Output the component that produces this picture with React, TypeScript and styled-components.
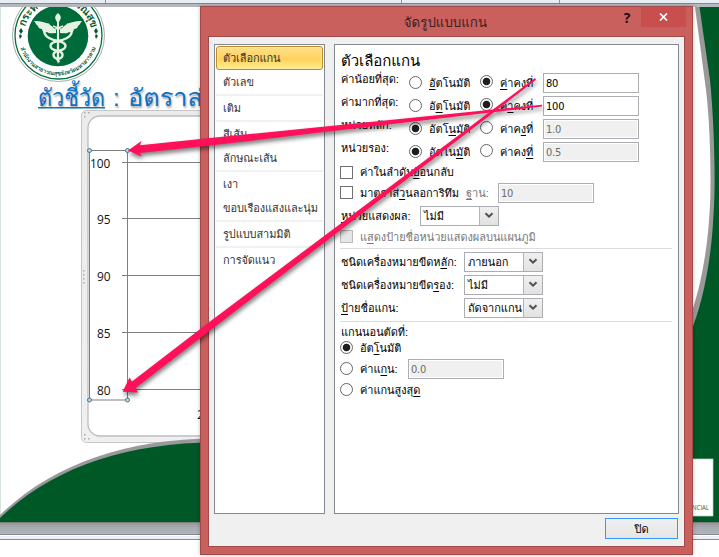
import React from 'react';
import styled, { createGlobalStyle } from 'styled-components';

const UI = 'Loma, "Noto Sans Thai Looped", "Noto Sans Thai", "Noto Sans", "DejaVu Sans", sans-serif';

const Global = createGlobalStyle`
  * { box-sizing: border-box; }
  html, body { margin: 0; padding: 0; background: #fff; overflow: hidden; }
  u { text-decoration: underline; text-underline-offset: 2px; text-decoration-thickness: 1px; text-decoration-skip-ink: none; }
`;

const Screen = styled.div`
  position: relative;
  width: 719px;
  height: 557px;
  overflow: hidden;
  display: flex;
  flex-direction: column;
  font-family: ${UI};
`;

const TopStrip = styled.div`
  height: 7px;
  display: flex;
  background: linear-gradient(#e9edf4 0 3px, #85888c 3px 4px, #b4b8bd 4px 7px);
`;
const Tick = styled.i<{ $gap: number }>`
  width: 1px;
  height: 3px;
  margin-left: ${p => p.$gap}px;
  background: #8d949d;
`;
const SlideSvg = styled.svg`
  display: block;
  flex: none;
`;
const SlideHeading = styled.g`
  font-size: 24px;
  fill: #0b72c4;
  text-shadow: 1px 2px 2px rgba(0, 0, 0, 0.35);
`;
const BottomStrip = styled.div`
  height: 18px;
  background: linear-gradient(#7c7f82 0 1px, #979a9c 1px, #a9adb1 6px, #b1b4b8 12px, #838b96 12px 13px, #fff 13px 14px, #eef0f3 14px 17px, #858c95 17px 18px);
`;

const Dialog = styled.section`
  position: absolute;
  left: 200px;
  top: 6px;
  width: 493px;
  height: 549px;
  display: flex;
  flex-direction: column;
  background: #c9605e;
  border: 1px solid #a04a49;
  padding: 0 7px 7px;
  box-shadow: 0 0 4px rgba(0, 0, 0, 0.25);
`;
const TitleBar = styled.header`
  height: 29px;
  margin-right: -1px;
  display: flex;
  justify-content: flex-end;
  align-items: flex-start;
  color: #3a1f20;
`;
const Title = styled.h1`
  margin: 0 133px 0 0;
  font-size: 13.3px;
  font-weight: 400;
  line-height: 31px;
  white-space: nowrap;
`;
const HelpMark = styled.span`
  width: 14px;
  margin-right: 7px;
  font: bold 14px/21px "Open Sans", sans-serif;
  text-align: center;
  color: #1c1010;
`;
const CloseButton = styled.button`
  width: 45px;
  height: 20px;
  padding: 0;
  border: 0;
  background: #c94f4f;
  display: grid;
  place-items: center;
`;
const Client = styled.div`
  flex: 1;
  border: 1px solid #a04a49;
  background: #f0f0f0;
  padding: 7px 5px 7px;
  display: flex;
  flex-direction: column;
  letter-spacing: -0.05px;
`;
const Panels = styled.div`
  height: 470px;
  display: flex;
  gap: 9px;
`;
const Nav = styled.nav`
  width: 111px;
  border: 1px solid #828790;
  background: #fff;
  padding: 1px;
  letter-spacing: -0.1px;
`;
const NavItem = styled.div<{ $on?: boolean; $line?: boolean }>`
  height: ${p => (p.$line ? 26 : 24)}px;
  padding-left: ${p => (p.$on ? 6 : 7)}px;
  line-height: ${p => (p.$on ? 22 : 24)}px;
  font-size: 11px;
  color: #333;
  white-space: nowrap;
  border: 0 solid #f0f0f5;
  border-bottom-width: ${p => (p.$line ? 2 : 0)}px;
  ${p => p.$on && `
    border: 1px solid #b98b2c;
    border-radius: 3px;
    background: linear-gradient(#fde08a, #ffd25d 55%, #fff08b);
    box-shadow: inset 0 0 0 1px #ffe9a0;
  `}
`;
const Pane = styled.main`
  width: 345px;
  border: 1px solid #828790;
  background: #fff;
  padding: 6px 6px 0 5px;
  font-size: 11px;
  color: #000;
`;
const Heading = styled.h2`
  margin: 0;
  padding-left: 1px;
  height: 20px;
  font-size: 15px;
  line-height: 20px;
  font-weight: 400;
  white-space: nowrap;
`;
const Row = styled.div<{ $h: number }>`
  height: ${p => p.$h}px;
  display: flex;
  align-items: center;
`;
const Text = styled.span<{ $w?: number; $dy?: number; $dim?: boolean; $indent?: number }>`
  flex: none;
  width: ${p => (p.$w ? `${p.$w}px` : 'auto')};
  padding-left: ${p => p.$indent ?? 0}px;
  padding-bottom: ${p => p.$dy ?? 0}px;
  color: ${p => (p.$dim ? '#777' : '#000')};
  line-height: 14px;
  white-space: nowrap;
`;
const RadioDot = styled.span<{ $on?: boolean; $lift?: boolean }>`
  flex: none;
  width: 13px;
  height: 13px;
  border: 1px solid #666;
  border-radius: 50%;
  background: ${p => (p.$on ? 'radial-gradient(circle, #1e1e1e 0 3.4px, #fff 4.2px)' : '#fff')};
  margin-bottom: ${p => (p.$lift ? 3 : 1)}px;
`;
const CheckBox = styled.span<{ $dim?: boolean }>`
  flex: none;
  width: 13px;
  height: 13px;
  border: 1px solid ${p => (p.$dim ? '#bcbcbc' : '#707070')};
  background: ${p => (p.$dim ? '#e6e6e6' : '#fff')};
  margin-bottom: 1px;
`;
const Field = styled.span<{ $dim?: boolean }>`
  flex: none;
  width: 96px;
  height: 20px;
  border: 1px solid #abadb3;
  box-shadow: inset 0 0 0 1px #fff;
  background: ${p => (p.$dim ? '#f0f0f0' : '#fff')};
  color: ${p => (p.$dim ? '#6d6d6d' : '#000')};
  padding-left: 2px;
  font: 11px/19px "DejaVu Sans Condensed", "DejaVu Sans", sans-serif;
  font-stretch: condensed;
  letter-spacing: -0.2px;
`;
const SelectBox = styled.span`
  flex: none;
  width: 79px;
  height: 20px;
  border: 1px solid #abadb3;
  padding-left: 3px;
  display: flex;
  justify-content: space-between;
  line-height: 18px;
  white-space: nowrap;
`;
const Drop = styled.i`
  flex: none;
  width: 19px;
  height: 18px;
  border: 1px solid #b4b4b4;
  border-width: 0 0 0 1px;
  background: linear-gradient(#f0f0f0, #e2e2e2);
  display: grid;
  place-items: center;
`;
const Rule = styled.hr`
  margin: 0;
  height: 1px;
  border: 0;
  background: #dcdcdc;
`;
const Gap = styled.div<{ $h: number }>`
  height: ${p => p.$h}px;
`;
const Footer = styled.footer`
  display: flex;
  justify-content: flex-end;
  padding: 4px 1px 0 0;
`;
const PushButton = styled.button`
  width: 73px;
  height: 21px;
  padding: 0;
  border: 1px solid #3399ff;
  background: linear-gradient(#f0f0f0, #e5e5e5);
  font: 11px/18px ${UI};
  color: #000;
`;
const ArrowLayer = styled.svg`
  position: absolute;
  left: 0;
  top: 0;
  pointer-events: none;
  filter: drop-shadow(1px 3px 2px rgba(0, 0, 0, 0.5));
`;

const Select = ({ children }: { children: React.ReactNode }) => (
  <SelectBox>
    {children}
    <Drop>
      <svg width="10" height="7" viewBox="0 0 10 7">
        <path d="M1.5 1.2 L5 4.7 L8.5 1.2" fill="none" stroke="#505050" strokeWidth="2" />
      </svg>
    </Drop>
  </SelectBox>
);

const nav = [
  { t: 'ตัวเลือกแกน', on: true },
  { t: 'ตัวเลข', line: true },
  { t: 'เติม', line: true },
  { t: 'สีเส้น' },
  { t: 'ลักษณะเส้น', line: true },
  { t: 'เงา' },
  { t: 'ขอบเรืองแสงและนุ่ม', line: true },
  { t: 'รูปแบบสามมิติ', line: true },
  { t: 'การจัดแนว' },
];

const scale = [
  { label: 'ค่าน้อยที่สุด:', auto: <><u>อั</u>ตโนมัติ</>, fix: <><u>ค่</u>าคงที่</>, v: '80', fixed: true },
  { label: 'ค่ามากที่สุด:', auto: <>อั<u>ต</u>โนมัติ</>, fix: <>ค่<u>า</u>คงที่</>, v: '100', fixed: true },
  { label: 'หน่วยหลัก:', auto: <>อัตโ<u>น</u>มัติ</>, fix: <>ค่าค<u>ง</u>ที่</>, v: '1.0', fixed: false },
  { label: 'หน่วยรอง:', auto: <>อัตโน<u>มั</u>ติ</>, fix: <>ค่าคง<u>ที่</u></>, v: '0.5', fixed: false },
];

const ticks: [string, number, number][] = [
  ['100', 90, 162.5], ['95', 97, 218.5], ['90', 97, 275.5], ['85', 97, 332.5], ['80', 97, 389.5],
];

const Emblem = () => (
  <g>
    <circle cx="58.5" cy="35.5" r="46" fill="#fff" stroke="#aaa" strokeWidth="1" />
    <circle cx="58.5" cy="35.5" r="43.5" fill="none" stroke="#00703c" strokeWidth="1.3" />
    <circle cx="58" cy="36" r="30.3" fill="#006b3a" />
    <path id="ringTop" d="M24 36 A34 34 0 0 1 92 36" fill="none" />
    <path id="ringBottom" d="M18.5 36 A39.5 39.5 0 0 0 97.5 36" fill="none" />
    <text fontSize="11" fontWeight="700" fill="#00582a"><textPath href="#ringTop" startOffset="9" textLength="90">กระทรวงสาธารณสุข</textPath></text>
    <text fontSize="6" fontWeight="700" fill="#00582a"><textPath href="#ringBottom" startOffset="12" textLength="100">สำนักงานสาธารณสุขจังหวัดมหาสารคาม</textPath></text>
    <path d="M21 28 l2 3 -2 3 -2 -3z M20 34 l2 2 -2 3 -1 -3z M96 28 l2 3 -2 3 -2 -3z M96 34 l2 2 -2 3 -1 -3z" fill="#00582a" />
    <g fill="#e4f2e4" stroke="none">
      <path d="M56 30 C53 28 50 21 34 21 C36 23 36 25 38 26 C38 28 40 29 42 29 C42 32 45 33 47 32 C49 34 52 33 56 33Z" />
      <path d="M60 30 C63 28 66 21 82 21 C80 23 80 25 78 26 C78 28 76 29 74 29 C74 32 71 33 69 32 C67 34 64 33 60 33Z" />
      <path d="M58 13 C53 17 56 20 57 22 L56.8 60 L58 64 L59.2 60 L59 22 C60 20 63 17 58 13Z" />
    </g>
    <g fill="none" stroke="#e4f2e4" strokeWidth="2.4">
      <path d="M49 24 C41 31 43 38 58 41 C68 43 68 49 58 51 C51 53 53 58 58 59" />
      <path d="M67 24 C75 31 73 38 58 41 C48 43 48 49 58 51 C65 53 63 58 58 59" />
      <path d="M53 26 l10 4 M63 26 l-10 4" strokeWidth="1.4" />
      <path d="M56.5 59 L59.5 62" strokeWidth="2" />
    </g>
  </g>
);

export default function App() {
  return (
    <Screen>
      <Global />
      <TopStrip><Tick $gap={105} /><Tick $gap={295} /><Tick $gap={157} /></TopStrip>
      <SlideSvg width="719" height="515" viewBox="0 7 719 515">
        <defs>
          <linearGradient id="frame" x1="0" y1="0" x2="0" y2="1">
            <stop offset="0" stopColor="#ebebeb" /><stop offset="1" stopColor="#f0f0f0" />
          </linearGradient>
        </defs>
        <rect x="0" y="7" width="719" height="515" fill="#fff" />
        <rect x="0" y="7" width="1" height="515" fill="#d5e6dc" />
        <Emblem />
        <rect x="81.5" y="110.5" width="200" height="332" rx="5" fill="url(#frame)" stroke="#c6c6c6" />
        <rect x="88" y="116" width="200" height="320" rx="12" fill="#fff" stroke="#bdbdbd" strokeWidth="1.3" />
        <g fill="#aaa">
          {[[84, 112], [88, 112], [84, 116], [83, 270], [83, 274], [83, 278], [83, 282], [84, 434], [84, 438], [88, 438]].map(([x, y]) => (
            <rect key={`${x}-${y}`} x={x} y={y} width="1.5" height="1.5" />
          ))}
        </g>
        <path d="M0 515 C50 466 125 438.5 215 438.5 L215 445 L0 522Z" fill="#999" />
        <path d="M0 518 C50 469 125 442.5 215 442.5 L215 522 L0 522Z" fill="#005826" />
        <path d="M695 7 L706 90 C711 130 711 190 710 205 C708 250 700 290 690 317 L690 340 L719 340 L719 7Z" fill="#999" />
        <path d="M699.5 7 L710 80 C714 120 716 180 713.5 215 C711 265 702 305 690 334 L690 522 L719 522 L719 7Z" fill="#005826" />
        <rect x="660" y="459" width="53" height="57" fill="#fff" stroke="#b9d3c3" strokeWidth="0.7" />
        <text x="679" y="510" fontSize="6.5" textLength="30" lengthAdjust="spacingAndGlyphs" fontFamily="Open Sans" fill="#1d6a40">FINANCIAL</text>
        <SlideHeading>
          <text x="38" y="106" textLength="67" lengthAdjust="spacingAndGlyphs">ตัวชี้วัด</text>
          <text x="113" y="106">:</text>
          <text x="128" y="106" textLength="75" lengthAdjust="spacingAndGlyphs">อัตราส่</text>
        </SlideHeading>
        <rect x="38" y="107" width="67" height="1.5" fill="#0b72c4" />
        <g stroke="#7f7f7f" fill="none">
          {ticks.map(([t, , y]) => <path key={t} d={`M122 ${y}H201`} />)}
          <path d="M127.5 151V400" />
          <rect x="89.5" y="150.5" width="38" height="249.5" />
        </g>
        <g fontFamily="Open Sans, sans-serif" fontSize="13" fill="#111">
          {ticks.map(([t, x, y]) => <text key={t} x={x} y={y + 5.5} textLength={t.length * 6.8} lengthAdjust="spacingAndGlyphs">{t}</text>)}
          <text x="197" y="419">2</text>
        </g>
        <g fill="#b9d9ec" stroke="#4d7391">
          {[[89.5, 150.5], [127.5, 150.5], [89.5, 400], [127.5, 400]].map(([x, y]) => <circle key={`${x}${y}`} cx={x} cy={y} r="2" />)}
        </g>
      </SlideSvg>
      <BottomStrip />
      <Dialog>
        <TitleBar>
          <Title>จัดรูปแบบแกน</Title>
          <HelpMark>?</HelpMark>
          <CloseButton aria-label="close">
            <svg width="9" height="8" viewBox="0 0 9 8"><path d="M1 .5 L8 7.5 M8 .5 L1 7.5" stroke="#fff" strokeWidth="1.7" /></svg>
          </CloseButton>
        </TitleBar>
        <Client>
          <Panels>
            <Nav>
              {nav.map(n => <NavItem key={n.t} $on={n.on} $line={n.line}>{n.t}</NavItem>)}
            </Nav>
            <Pane>
              <Heading>ตัวเลือกแกน</Heading>
              {scale.map(r => (
                <Row $h={23} key={r.v}>
                  <Text $w={69} $dy={7} $indent={1}>{r.label}</Text>
                  <RadioDot $on={!r.fixed} />
                  <Text $w={58} $indent={7}>{r.auto}</Text>
                  <RadioDot $on={r.fixed} $lift />
                  <Text $w={50} $indent={7}>{r.fix}</Text>
                  <Field $dim={!r.fixed}>{r.v}</Field>
                </Row>
              ))}
              <Row $h={19}><CheckBox /><Text $indent={7} $dy={1}>ค่าในลำดับ<u>ย้</u>อนกลับ</Text></Row>
              <Row $h={22}>
                <CheckBox /><Text $w={113} $indent={7}>มาตราส่<u>ว</u>นลอการิทึม</Text>
                <Text $dim $w={32}><u>ฐ</u>าน:</Text><Field $dim>10</Field>
              </Row>
              <Row $h={23}><Text $w={80} $indent={1}><u>ห</u>น่วยแสดงผล:</Text><Select>ไม่มี</Select></Row>
              <Row $h={20}><CheckBox $dim /><Text $dim $indent={7}>แ<u>ส</u>ดงป้ายชื่อหน่วยแสดงผลบนแผนภูมิ</Text></Row>
              <Gap $h={1} />
              <Rule />
              <Gap $h={1} />
              <Row $h={23}><Text $w={124} $indent={1}>ชนิดเครื่องหมายขีดห<u>ลั</u>ก:</Text><Select>ภายนอก</Select></Row>
              <Row $h={23}><Text $w={124} $indent={1}>ชนิดเครื่องหมายขีด<u>ร</u>อง:</Text><Select>ไม่มี</Select></Row>
              <Row $h={23}><Text $w={124} $indent={1}><u>ป้</u>ายชื่อแกน:</Text><Select>ถัดจากแกน</Select></Row>
              <Gap $h={2} />
              <Rule />
              <Gap $h={3} />
              <Row $h={14}><Text $indent={1}>แกนนอนตัดที่:</Text></Row>
              <Row $h={18}><RadioDot $on /><Text $indent={7}>อัต<u>โ</u>นมัติ</Text></Row>
              <Row $h={24}><RadioDot /><Text $w={55} $indent={7}>ค่าแ<u>ก</u>น:</Text><Field $dim>0.0</Field></Row>
              <Row $h={18}><RadioDot /><Text $indent={7}>ค่าแกนสูงสุ<u>ด</u></Text></Row>
            </Pane>
          </Panels>
          <Footer><PushButton>ปิด</PushButton></Footer>
        </Client>
      </Dialog>
      <ArrowLayer width="719" height="557" viewBox="0 0 719 557">
        <g fill="#ff1059">
          <path d="M128 150.5 L141.5 141 L140 145.2 L210 138 L542 104.7 L542 106.5 L210 145.5 L140 153 L141.5 156.5Z" />
          <path d="M122.7 391.7 L129.5 377.5 L132 381.5 L210 321.5 L535 78 L536 79.8 L210 330.5 L135.5 388 L138 392.5Z" />
        </g>
      </ArrowLayer>
    </Screen>
  );
}
